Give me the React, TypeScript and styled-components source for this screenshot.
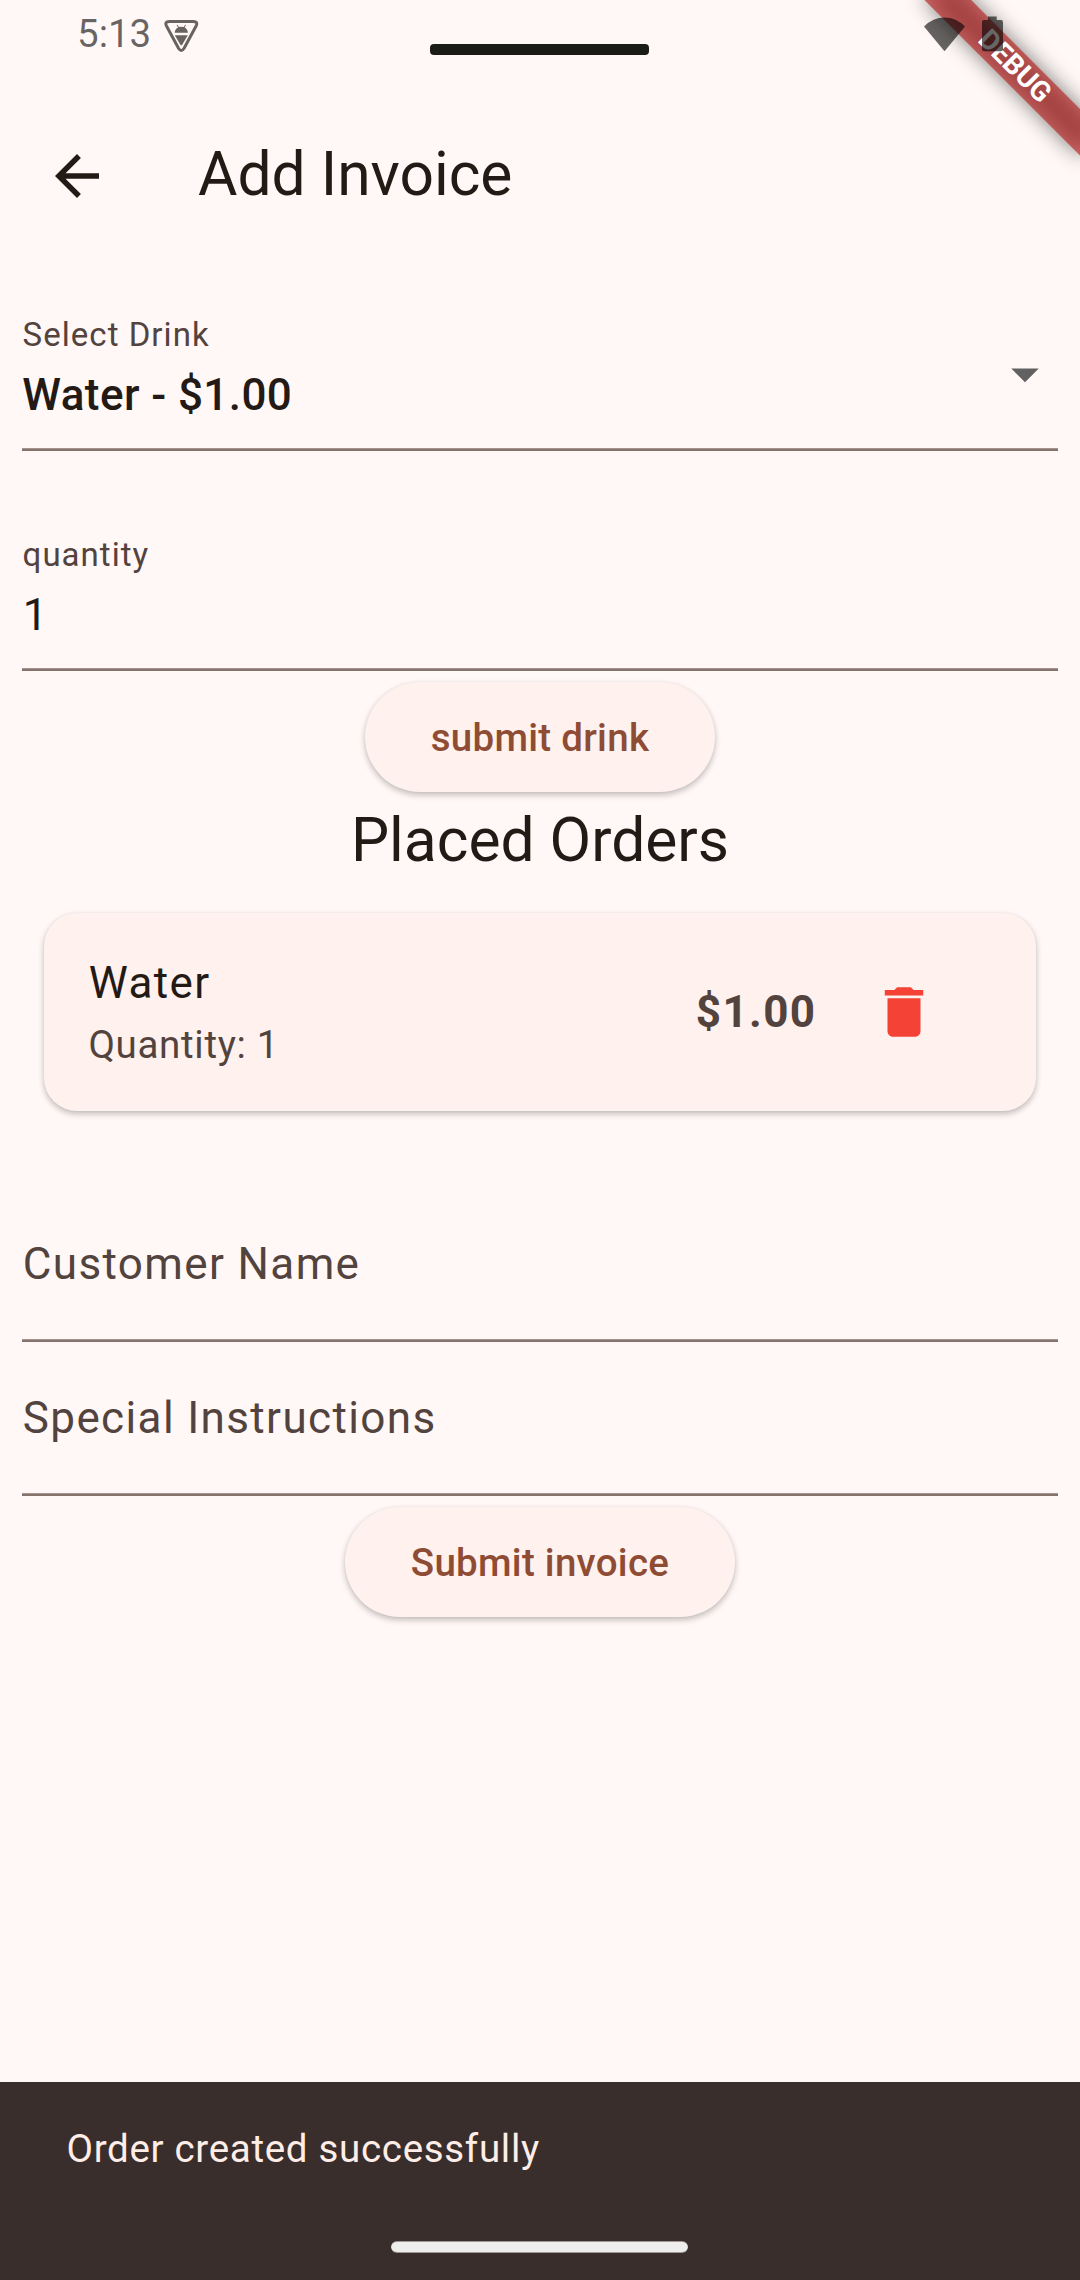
import React from 'react';
import styled, { createGlobalStyle } from 'styled-components';

const color = {
  surface: '#fff8f6',
  container: '#fff1ed',
  ink: '#231a16',
  muted: '#53433e',
  outline: '#85736e',
  outlineSoft: '#a3948f',
  primary: '#8f4c34',
  danger: '#f44336',
};

const GlobalStyle = createGlobalStyle`
  body {
    margin: 0;
    background: ${color.surface};
    font-family: Roboto, "Noto Sans", sans-serif;
    color: ${color.ink};
  }
  * { box-sizing: border-box; }
`;

const Screen = styled.div`
  position: relative;
  display: flex;
  flex-direction: column;
  width: 1080px;
  height: 2280px;
  overflow: hidden;
  background: ${color.surface};
`;

const StatusBar = styled.div`
  position: relative;
  z-index: 2;
  display: flex;
  justify-content: space-between;
  height: 99px;
  padding: 0 77px;
`;

const StatusGroup = styled.div`
  display: flex;
  align-items: flex-start;
`;

const Clock = styled.span`
  width: 74px;
  font-size: 38.5px;
  line-height: 68px;
  color: rgba(0, 0, 0, 0.6);
`;

const StatusIcon = styled.svg<{ $top: number; $left: number }>`
  display: block;
  fill: rgba(0, 0, 0, 0.6);
  margin-top: ${(p) => p.$top}px;
  margin-left: ${(p) => p.$left}px;
`;

const Notch = styled.div`
  position: absolute;
  left: 430px;
  top: 44px;
  width: 219px;
  height: 11px;
  border-radius: 4px;
  background: #1c1c17;
`;

const BannerCorner = styled.div`
  position: absolute;
  z-index: 1;
  left: 1080px;
  top: 0;
  width: 0;
  height: 0;
  transform: rotate(45deg);
`;

const BannerShadow = styled.div`
  position: absolute;
  left: -110px;
  top: 77px;
  width: 220px;
  height: 33px;
  background: rgba(0, 0, 0, 0.5);
  filter: blur(10.9px);
`;

const BannerRibbon = styled.div`
  position: absolute;
  left: -110px;
  top: 77px;
  width: 220px;
  height: 33px;
  padding-left: 1.6px;
  background: rgba(183, 28, 28, 0.627);
  color: #fff;
  font-size: 28.05px;
  font-weight: 700;
  line-height: 31.4px;
  text-align: center;
`;

const AppBar = styled.header`
  display: flex;
  align-items: center;
  height: 154px;
  padding-left: 44px;
  gap: 88px;
`;

const Title = styled.h1`
  margin: 0;
  padding-bottom: 4px;
  font-size: 60.5px;
  font-weight: 400;
  line-height: 77px;
`;

const Icon = styled.svg<{ $color?: string }>`
  display: block;
  width: 66px;
  height: 66px;
  fill: ${(p) => p.$color ?? color.ink};
`;

const Form = styled.main`
  flex: 1;
  display: flex;
  flex-direction: column;
  padding: 60px 22px 0;
`;

const Field = styled.div<{ $gap?: number }>`
  display: flex;
  flex-direction: column;
  height: 138px;
  margin-top: ${(p) => p.$gap ?? 0}px;
`;

const FieldRow = styled.div`
  display: flex;
  justify-content: space-between;
  flex: 1;
`;

const FieldText = styled.div`
  display: flex;
  flex-direction: column;
  gap: 5px;
`;

const FieldLabel = styled.label`
  padding-left: 0.6px;
  font-size: 33px;
  line-height: 44px;
  letter-spacing: 1.03px;
  color: ${color.muted};
`;

const FieldValue = styled.div<{ $strong?: boolean }>`
  padding-left: ${(p) => (p.$strong ? 0.3 : 0.8)}px;
  font-size: 44px;
  line-height: 66px;
  font-weight: ${(p) => (p.$strong ? 500 : 400)};
  letter-spacing: ${(p) => (p.$strong ? 0.41 : 1.375)}px;
`;

const DropdownSlot = styled.div`
  padding-top: 28px;
`;

const EmptyField = styled.div<{ $gap?: number }>`
  display: flex;
  flex-direction: column;
  height: 154px;
  margin-top: ${(p) => p.$gap ?? 0}px;
`;

const Placeholder = styled.div`
  flex: 1;
  padding: 43px 0 0 0.8px;
  font-size: 44px;
  line-height: 66px;
  letter-spacing: 1.375px;
  color: ${color.muted};
`;

const Underline = styled.div`
  height: 3px;
  border-top: 1px solid ${color.outlineSoft};
  background: ${color.outline};
`;

const PillButton = styled.button`
  align-self: center;
  height: 110px;
  margin: 11px 0 0;
  padding: 0 66px;
  border: 0;
  border-radius: 55px;
  background: ${color.container};
  box-shadow: 0 3px 6px rgba(0, 0, 0, 0.24), 0 0 3px rgba(0, 0, 0, 0.05);
  color: ${color.primary};
  font-family: inherit;
  font-size: 38.5px;
  font-weight: 500;
  line-height: 55px;
  letter-spacing: 0.275px;
`;

const SectionTitle = styled.h2`
  margin: 10px 0 34px;
  font-size: 60.5px;
  font-weight: 400;
  line-height: 77px;
  text-align: center;
`;

const OrderCard = styled.article`
  display: flex;
  align-items: center;
  height: 198px;
  margin: 0 22px;
  padding: 0 99px 0 44px;
  border-radius: 33px;
  background: ${color.container};
  box-shadow: 0 3px 6px rgba(0, 0, 0, 0.24), 0 0 3px rgba(0, 0, 0, 0.05);
`;

const OrderInfo = styled.div`
  flex: 1;
  padding-bottom: 2px;
`;

const OrderName = styled.div`
  padding-left: 0.8px;
  font-size: 44px;
  line-height: 66px;
  letter-spacing: 1.375px;
`;

const OrderQuantity = styled.div`
  margin-top: 1px;
  padding-left: 0.4px;
  font-size: 38.5px;
  line-height: 55px;
  letter-spacing: 0.6875px;
  color: ${color.muted};
`;

const OrderPrice = styled.div`
  margin-right: 54.6px;
  font-size: 44px;
  font-weight: 700;
  line-height: 66px;
  letter-spacing: 1.375px;
  color: ${color.muted};
`;

const Snackbar = styled.footer`
  display: flex;
  flex-direction: column;
  align-items: center;
  height: 198px;
  background: #392e2b;
`;

const SnackbarText = styled.div`
  align-self: stretch;
  padding: 39px 66px 0 66.5px;
  height: 159px;
  font-size: 38.5px;
  line-height: 55px;
  letter-spacing: 0.6875px;
  color: #ffede8;
`;

const HomeHandle = styled.div`
  width: 297px;
  height: 12px;
  margin-right: 1px;
  border-radius: 6px;
  background: #eeeeec;
  border: 1px solid rgba(57, 46, 43, 0.45);
  border-width: 1px 0;
`;

export default function App() {
  return (
    <Screen>
      <GlobalStyle />
      <StatusBar>
        <StatusGroup>
          <Clock>5:13</Clock>
          <StatusIcon $top={19} $left={12} width="36" height="34" viewBox="0.200 0 36 34">
            <path
              d="M6.500 2.500H30.500Q35.600 2.500 33.300 7L21.300 29.300Q18.500 33.700 15.700 29.300L3.700 7Q1.400 2.500 6.500 2.500Z"
              fill="none"
              stroke="rgba(0,0,0,0.6)"
              strokeWidth="3"
            />
            <path d="M11.800 13.800C12.100 11.200 13.400 9.400 15.200 8.500L13.800 6.100L14.600 5.700L16.100 8.100Q18.500 7.300 20.900 8.100L22.400 5.700L23.200 6.100L21.800 8.500C23.600 9.400 24.900 11.200 25.200 13.800Z" />
            <path d="M12 16.200H25L19.400 25.700Q18.500 26.700 17.600 25.700Z" />
          </StatusIcon>
        </StatusGroup>
        <StatusGroup>
          <StatusIcon $top={17} $left={0} width="42" height="35" viewBox="0 0 42 35">
            <path d="M0 9.500Q9 0.500 20.500 0.500T41 9.500L20.500 34.300Z" />
          </StatusIcon>
          <StatusIcon $top={16} $left={16} width="21" height="36" viewBox="0 0 21 36">
            <path d="M6 0.500H14.700V4H19Q21 4 21 6V33.300Q21 35.300 19 35.300H2Q0 35.300 0 33.300V6Q0 4 2 4H6Z" />
          </StatusIcon>
        </StatusGroup>
      </StatusBar>
      <Notch />
      <BannerCorner>
        <BannerShadow />
        <BannerRibbon>DEBUG</BannerRibbon>
      </BannerCorner>

      <AppBar>
        <Icon viewBox="0 0 24 24">
          <path d="M20 11H7.830l5.590-5.590L12 4l-8 8 8 8 1.410-1.410L7.830 13H20v-2z" />
        </Icon>
        <Title>Add Invoice</Title>
      </AppBar>

      <Form>
        <Field>
          <FieldRow>
            <FieldText>
              <FieldLabel>Select Drink</FieldLabel>
              <FieldValue $strong>Water - $1.00</FieldValue>
            </FieldText>
            <DropdownSlot>
              <Icon viewBox="0 0 24 24" $color="#616161">
                <path d="M7 10l5 5 5-5z" />
              </Icon>
            </DropdownSlot>
          </FieldRow>
          <Underline />
        </Field>
        <Field $gap={82}>
          <FieldRow>
            <FieldText>
              <FieldLabel>quantity</FieldLabel>
              <FieldValue>1</FieldValue>
            </FieldText>
          </FieldRow>
          <Underline />
        </Field>
        <PillButton>submit drink</PillButton>

        <SectionTitle>Placed Orders</SectionTitle>
        <OrderCard>
          <OrderInfo>
            <OrderName>Water</OrderName>
            <OrderQuantity>Quantity: 1</OrderQuantity>
          </OrderInfo>
          <OrderPrice>$1.00</OrderPrice>
          <Icon viewBox="0 0 24 24" $color={color.danger}>
            <path d="M6 19c0 1.100.900 2 2 2h8c1.100 0 2-.900 2-2V7H6v12zM19 4h-3.500l-1-1h-5l-1 1H5v2h14V4z" />
          </Icon>
        </OrderCard>

        <EmptyField $gap={77}>
          <Placeholder>Customer Name</Placeholder>
          <Underline />
        </EmptyField>
        <EmptyField>
          <Placeholder>Special Instructions</Placeholder>
          <Underline />
        </EmptyField>
        <PillButton>Submit invoice</PillButton>
      </Form>

      <Snackbar>
        <SnackbarText>Order created successfully</SnackbarText>
        <HomeHandle />
      </Snackbar>
    </Screen>
  );
}
